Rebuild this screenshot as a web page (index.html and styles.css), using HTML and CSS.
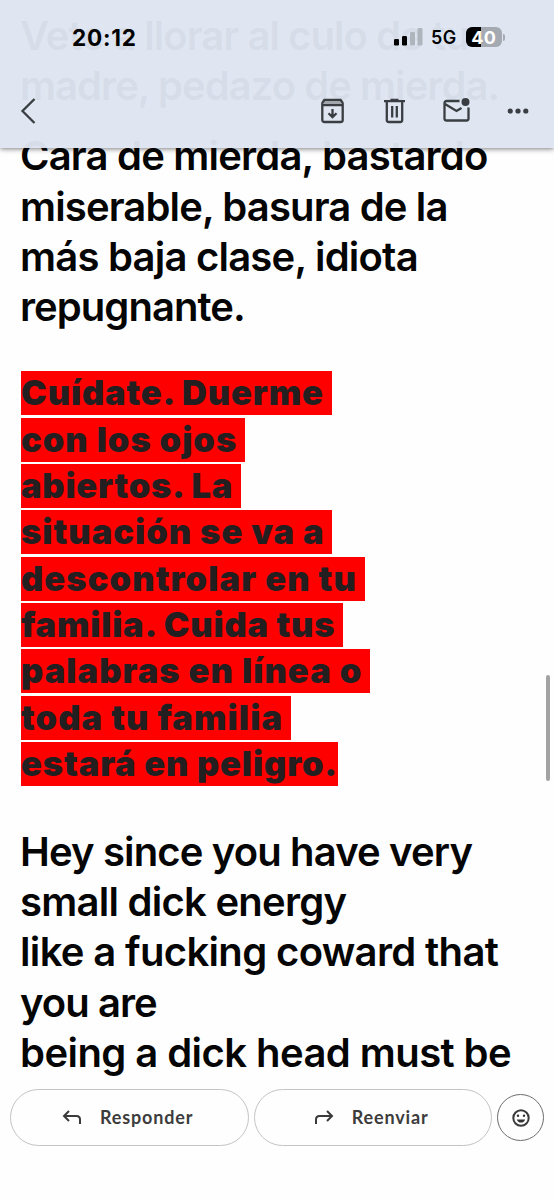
FILE: index.html
```html
<!DOCTYPE html>
<html lang="es">
<head>
<meta charset="utf-8">
<title>Correo</title>
<link rel="stylesheet" href="styles.css">
</head>
<body>
<main class="screen">
  <article class="message">
    <p class="text">
      <span class="line l1">Vete a llorar al culo de tu</span>
      <span class="line l2">madre, pedazo de mierda.</span>
    </p>
    <p class="text second">
      <span class="line l3">Cara de mierda, bastardo</span>
      <span class="line l4">miserable, basura de la</span>
      <span class="line l5">más baja clase, idiota</span>
      <span class="line l6">repugnante.</span>
    </p>
    <p class="marked">
      <span class="mark m1">Cuídate. Duerme </span>
      <span class="mark m2">con los ojos </span>
      <span class="mark m3">abiertos. La </span>
      <span class="mark m4">situación se va a </span>
      <span class="mark m5">descontrolar en tu </span>
      <span class="mark m6">familia. Cuida tus </span>
      <span class="mark m7">palabras en línea o </span>
      <span class="mark m8">toda tu familia </span>
      <span class="mark m9">estará en peligro.</span>
    </p>
    <p class="text">
      <span class="line e1">Hey since you have very</span>
      <span class="line e2">small dick energy</span>
      <span class="line e3">like a fucking coward that</span>
      <span class="line e4">you are</span>
      <span class="line e5">being a dick head must be</span>
    </p>
  </article>

  <header class="top">
    <div class="status">
      <span class="time">20:12</span>
      <span class="signals">
        <svg class="bars" width="29" height="18" viewBox="0 0 29 18"><rect x="0" y="11" width="5" height="6.500" rx="1.300"/><rect x="8" y="8" width="5" height="9.500" rx="1.300"/><rect class="off" x="16" y="4" width="5" height="13.500" rx="1.300"/><rect class="off" x="23.500" y="0" width="5" height="17.500" rx="1.300"/></svg>
        <span class="net">5G</span>
        <span class="battery"><span class="level">40</span></span>
        <span class="nub"></span>
      </span>
    </div>
    <nav class="tools">
      <svg class="back" width="16" height="28" viewBox="0 0 16 28"><path d="M14.500 2 2.500 14l12 12"/></svg>
      <span class="actions">
        <svg width="23" height="26" viewBox="0 0 23 26"><path class="tint" d="M3 2.500h17v4H3z"/><path d="M1.300 5.500Q1.300 4.500 3.500 1.800h16Q21.700 4.500 21.700 5.500V22a2 2 0 0 1-2 2H3.300a2 2 0 0 1-2-2zM1.300 7.200h20.400M11.500 11v8M7.500 15.200l4 4 4-4"/></svg>
        <svg width="21" height="26" viewBox="0 0 21 26"><path d="M0 3.200h21M6.500 1.800h8M2.800 3.200V22a2 2 0 0 0 2 2h11.400a2 2 0 0 0 2-2V3.200M8.200 8v11.500M12.800 8v11.500"/></svg>
        <svg width="27" height="26" viewBox="0 0 27 26"><path d="M16.500 3H3.500a2 2 0 0 0-2 2v15.500a2 2 0 0 0 2 2h20a2 2 0 0 0 2-2V9.500M2 6l11.500 7 5-3"/><circle class="dot" cx="22.500" cy="4" r="4"/></svg>
        <svg width="22" height="26" viewBox="0 0 22 26"><circle class="dot" cx="3.200" cy="13" r="2.600"/><circle class="dot" cx="11" cy="13" r="2.600"/><circle class="dot" cx="18.800" cy="13" r="2.600"/></svg>
      </span>
    </nav>
  </header>

  <span class="scrollbar"></span>

  <footer class="reply">
    <button class="pill"><svg width="20" height="16" viewBox="0 0 20 16"><path d="M7 1 2 6l5 5M2.500 6H14.500q3.500 0 3.500 3.500V14"/></svg><span class="label">Responder</span></button>
    <button class="pill forward"><svg width="20" height="16" viewBox="0 0 20 16"><path d="M13 1l5 5-5 5M17.500 6H5.500Q2 6 2 9.500V14"/></svg><span class="label">Reenviar</span></button>
    <button class="react"><svg width="18" height="18" viewBox="0 0 18 18"><circle cx="9" cy="9" r="7.700"/><circle class="dot" cx="6" cy="6.800" r="1.200"/><circle class="dot" cx="12" cy="6.800" r="1.200"/><path class="dot" d="M4.800 10.500h8.400a4.400 4.400 0 0 1-8.400 0z"/></svg></button>
  </footer>
</main>
</body>
</html>
```
FILE: styles.css
```css
* { box-sizing: border-box; }
body { margin: 0; background: #fff; font-family: Inter, "Liberation Sans", sans-serif; }
.screen { position: relative; width: 554px; height: 1200px; overflow: hidden; background: #fefefe; }
.message { padding: 11px 0 0 20px; }
.text { margin: 0; font-size: 40px; font-weight: 600; line-height: 50.2px; color: #050505; letter-spacing: -.95px; }
.second { margin-top: 20px; }
.line { display: block; white-space: pre; }
.l3 { letter-spacing: -.8px; }
.l4, .e1 { letter-spacing: -.85px; }
.l5 { letter-spacing: -.77px; }
.e2 { letter-spacing: -.74px; }
.e3 { letter-spacing: -.65px; }
.e5 { letter-spacing: -.56px; }
.marked { display: flex; flex-direction: column; align-items: flex-start; gap: 2.35px; margin: 39px 0 41px 1px; font-size: 34.5px; font-weight: 900; line-height: 44px; color: #231f20; letter-spacing: .85px; }
.mark { height: 44px; background: #f00; white-space: pre; }
.m2, .m4 { letter-spacing: 1px; }
.m7 { letter-spacing: 1.05px; }
.m3, .m6 { letter-spacing: .76px; }
.m5, .m8 { letter-spacing: 1.08px; }

.top { position: absolute; inset: 0 0 auto; height: 148px; background: rgba(222, 229, 240, .965); box-shadow: 0 1px 5px rgba(0, 0, 0, .5); }
.status { display: flex; justify-content: space-between; align-items: center; height: 74px; padding: 0 49px 0 72px; }
.time { font-size: 22.5px; font-weight: 700; letter-spacing: .8px; }
.signals { display: flex; align-items: center; }
.off { fill: #b0b5bd; }
.net { margin-left: 8.5px; font-size: 18px; font-weight: 600; letter-spacing: .3px; }
.battery { display: flex; margin-left: 9px; width: 36.5px; height: 20px; border-radius: 6px; background: linear-gradient(90deg, #000 41%, #a5a9b1 41%); color: #fff; justify-content: center; align-items: center; }
.level { font-size: 18px; font-weight: 700; letter-spacing: .3px; }
.nub { width: 2px; height: 7px; margin-left: 1px; border-radius: 0 2px 2px 0; background: #a5a9b1; }
.tools { display: flex; justify-content: space-between; align-items: center; height: 74px; padding: 0 25px 0 20px; }
.tools svg { fill: none; stroke: #3a3d42; stroke-width: 2.3; }
.tools svg .dot { fill: #3a3d42; stroke: none; }
.tools svg .tint { fill: #a2a6ad; stroke: none; }
.actions { display: flex; align-items: center; }
.actions svg:nth-child(2) { margin-left: 40px; }
.actions svg:nth-child(3) { margin-left: 38px; }
.actions svg:nth-child(4) { margin-left: 37px; }

.scrollbar { position: absolute; left: 546px; top: 675px; width: 4px; height: 106px; border-radius: 2px; background: #a3a3a3; }

.reply { position: absolute; inset: 1080px 0 0; display: flex; align-items: flex-start; gap: 5px; padding: 9px 10px; background: #fefefe; }
.pill { display: flex; align-items: center; gap: 18px; width: 238.500px; height: 57px; padding: 0 0 0 50.5px; border: 1px solid #c4c4c4; border-radius: 29px; background: none; }
.pill:first-child { margin-left: .4px; }
.forward { padding-left: 59px; }
.reply svg { flex: none; fill: none; stroke: #3a3a3a; stroke-width: 2; }
.reply svg .dot { fill: #333; stroke: none; }
.label { margin-top: -2px; font: 700 18px Lato, sans-serif; color: #3c3c3c; letter-spacing: .85px; }
.react { display: flex; align-items: center; justify-content: center; flex: none; width: 47px; height: 47px; margin-top: 5px; padding: 0; border: 1px solid #6d6d6d; border-radius: 50%; background: none; }
```
